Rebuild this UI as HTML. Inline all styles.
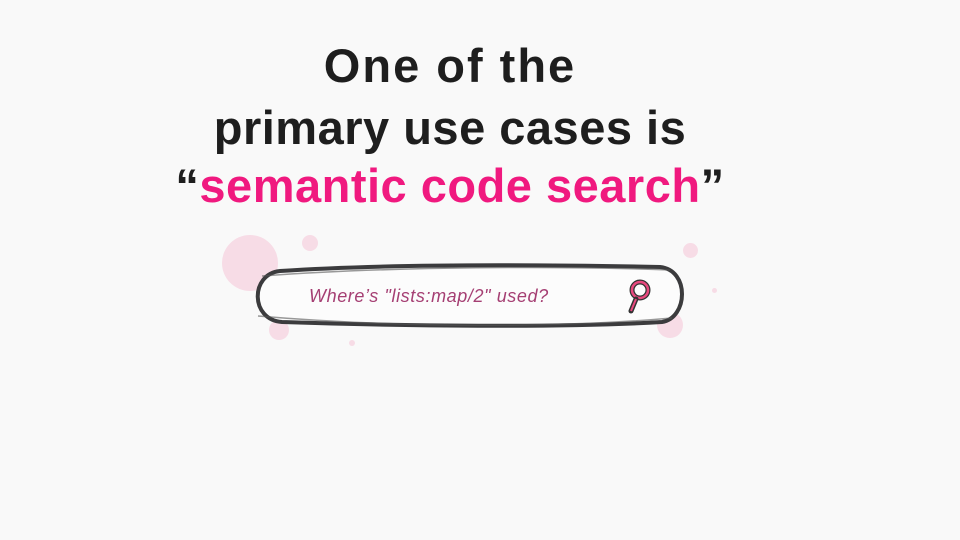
<!DOCTYPE html>
<html><head><style>
html,body{margin:0;padding:0;width:960px;height:540px;background:#f9f9f9;overflow:hidden;position:relative;font-family:"Liberation Sans",sans-serif}
.t{position:absolute;left:0;width:900px;text-align:center;font-weight:bold;font-size:47px;color:#1e1e1e;letter-spacing:0.5px}
.p{color:#f0197f}
.c{position:absolute;border-radius:50%;background:#f7dce6}
</style></head><body>
<div class="t" style="top:38px;letter-spacing:2px">One of the</div>
<div class="t" style="top:100px">primary use cases is</div>
<div class="t" style="top:158px">“<span class="p">semantic code search</span>”</div>
<div class="c" style="left:222px;top:235px;width:56px;height:56px"></div>
<div class="c" style="left:302px;top:235px;width:16px;height:16px"></div>
<div class="c" style="left:683px;top:243px;width:15px;height:15px"></div>
<div class="c" style="left:712px;top:288px;width:5px;height:5px"></div>
<div class="c" style="left:269px;top:320px;width:20px;height:20px"></div>
<div class="c" style="left:657px;top:312px;width:26px;height:26px"></div>
<div class="c" style="left:349px;top:340px;width:6px;height:6px"></div>
<svg style="position:absolute;left:0;top:0" width="960" height="540">
<path d="M280 271 C400 263 560 265 660 267 C690 270 688 318 662 322 C560 328 400 326 282 322 C250 320 250 274 280 271 Z" fill="#fcfcfc" stroke="#3b3b3d" stroke-width="4"/>
<path d="M262 276 C400 266 560 266 670 270 M258 316 C400 328 560 328 672 318" fill="none" stroke="#555" stroke-width="1.5" opacity=".6"/>
<circle cx="640" cy="290" r="8" fill="none" stroke="#333" stroke-width="5"/>
<circle cx="640" cy="290" r="8" fill="none" stroke="#e8497e" stroke-width="2.5"/>
<line x1="636" y1="299" x2="631" y2="311" stroke="#333" stroke-width="5" stroke-linecap="round"/>
<line x1="636" y1="299" x2="631" y2="311" stroke="#e8497e" stroke-width="2"/>
<text x="309" y="302" font-family="Liberation Sans, sans-serif" font-style="italic" font-size="18" letter-spacing="0.6" fill="#a53f73">Where’s "lists:map/2" used?</text>
</svg>
</body></html>
